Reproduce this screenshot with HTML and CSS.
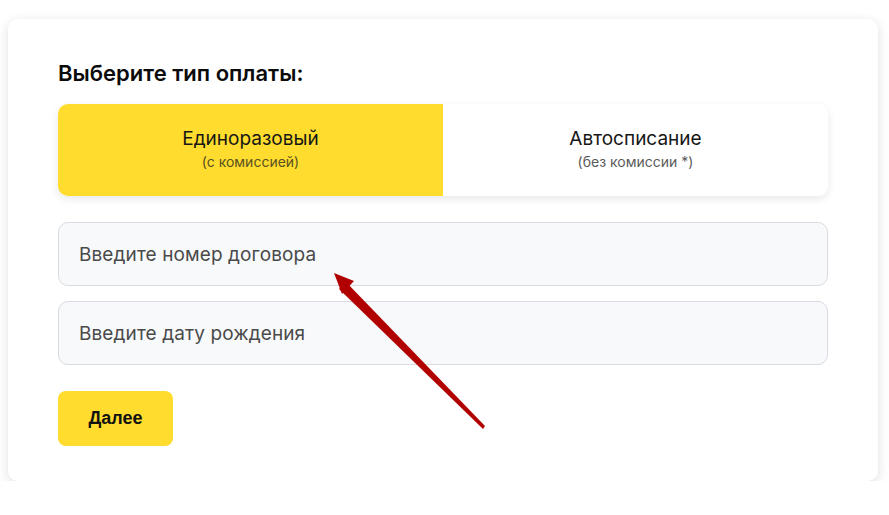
FILE: index.html
```html
<!DOCTYPE html>
<html lang="ru">
<head>
  <meta charset="UTF-8" />
  <title>Оплата</title>
  <link rel="stylesheet" href="styles.css">
</head>
<body>
  <div class="card">
    <h2 class="title">Выберите тип оплаты:</h2>
    <div class="pay-type">
      <div class="pay-option active">
        <span class="pay-name">Единоразовый</span>
        <span class="pay-note">(с комиссией)</span>
      </div>
      <div class="pay-option">
        <span class="pay-name">Автосписание</span>
        <span class="pay-note">(без комиссии *)</span>
      </div>
    </div>
    <input class="field" type="text" placeholder="Введите номер договора">
    <input class="field" type="text" placeholder="Введите дату рождения">
    <button class="next-btn">Далее</button>
  </div>

  <!-- стрелка-указатель поверх формы -->
  <svg class="pointer" width="889" height="515" viewBox="0 0 889 515">
    <polygon points="346,282 485,426 483,429 339,289" fill="#b00000"/>
    <polygon points="334,273 354,281 342,294" fill="#b00000"/>
  </svg>
</body>
</html>
```

FILE: styles.css
```css
* {
  margin: 0;
  padding: 0;
  box-sizing: border-box;
}

body {
  background-color: #ffffff;
  font-family: 'Inter', 'Noto Sans', sans-serif;
  color: #111;
  padding: 19px 11px 0 8px;
}

.card {
  width: 870px;
  height: 462px;
  background-color: #fff;
  border-radius: 10px;
  box-shadow: 0 3px 12px rgba(20, 30, 50, 0.14);
  padding: 41px 50px 0 50px;
  display: flex;
  flex-direction: column;
}

.title {
  font-size: 22px;
  font-weight: 600;
  letter-spacing: 0;
  line-height: 26px;
  margin-bottom: 18px;
  color: #0b0b0b;
}

.pay-type {
  display: flex;
  height: 92px;
  border-radius: 10px;
  overflow: hidden;
  box-shadow: 0 3px 8px rgba(20, 30, 50, 0.1);
  margin-bottom: 26px;
}
.pay-option {
  flex: 1;
  display: flex;
  flex-direction: column;
  align-items: center;
  justify-content: center;
  background-color: #fff;
  padding-bottom: 2px;
}
.pay-option.active {
  background-color: #ffdc2d;
}
.pay-name {
  font-size: 19px;
  font-weight: 400;
  color: #161616;
  line-height: 24px;
}
.pay-note {
  font-size: 14px;
  color: #5b5b5b;
  line-height: 18px;
  margin-top: 2px;
}
.pay-option.active .pay-note {
  color: #5a5020;
}

.field {
  height: 64px;
  width: 100%;
  border: 1px solid #d9dbe0;
  border-radius: 10px;
  background-color: #f8f9fb;
  padding: 0 20px;
  font-family: inherit;
  font-size: 19px;
  letter-spacing: 0.1px;
  color: #222;
  margin-bottom: 15px;
  outline: none;
}
.field::placeholder {
  color: #4a4a4a;
}

.next-btn {
  align-self: flex-start;
  margin-top: 11px;
  width: 115px;
  height: 55px;
  border: none;
  border-radius: 8px;
  background-color: #ffdc2d;
  font-family: 'Liberation Sans', Arial, sans-serif;
  font-weight: bold;
  font-size: 18px;
  color: #111;
  cursor: pointer;
}

.pointer {
  position: absolute;
  left: 0;
  top: 0;
  pointer-events: none;
}
```
